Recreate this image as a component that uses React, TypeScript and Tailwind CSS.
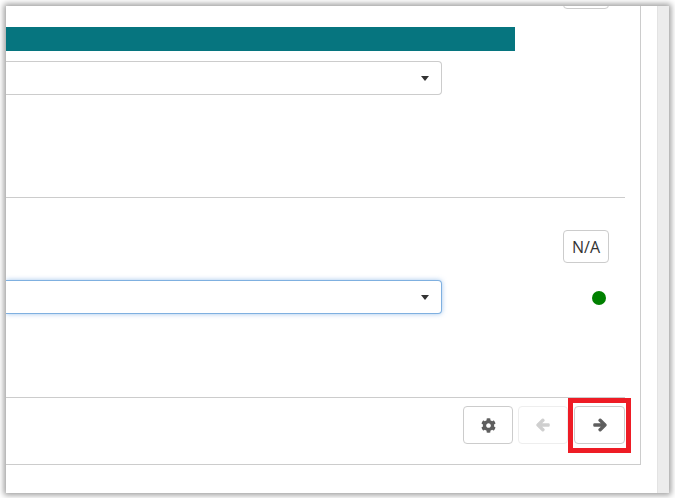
import { FaArrowLeft, FaArrowRight, FaCog } from "react-icons/fa";

function SelectBox({ focused }: { focused?: boolean }) {
  return (
    <div
      className={
        focused
          ? "flex h-[34px] w-[436px] items-center justify-end rounded-r-[4px] border border-l-0 border-[#7fb0e0] bg-white pr-[12px] shadow-[0_0_5px_rgba(102,160,225,0.6)]"
          : "flex h-[34px] w-[436px] items-center justify-end rounded-r-[4px] border border-l-0 border-[#cccccc] bg-white pr-[12px]"
      }
    >
      <span className="h-0 w-0 border-x-[4px] border-t-[5px] border-x-transparent border-t-[#333333]" />
    </div>
  );
}

export default function App() {
  return (
    <div className="relative h-[498px] w-[675px] overflow-hidden bg-white pt-[6px] pl-[6px] font-['Open_Sans',sans-serif]">
      <div className="flex h-[487px] w-[663px] overflow-hidden bg-white shadow-[0_0_6px_2px_rgba(0,0,0,0.4)]">
        <div className="w-[651px] pr-[16px]">
          <div className="flex h-[459px] w-[635px] flex-col border-r border-b border-[#cccccc]">
            <div className="flex justify-end pr-[31px]">
              <div className="-mt-[30px] h-[33px] w-[46px] shrink-0 rounded-[4px] border border-[#cccccc] bg-white" />
            </div>
            <div className="mt-[18px] h-[24px] w-[509px] shrink-0 bg-[#06757f]" />
            <div className="mt-[10px]">
              <SelectBox />
            </div>
            <div className="mt-[102px] mr-[15px] border-t border-[#cccccc]" />
            <div className="mt-[32px] flex justify-end pr-[31px]">
              <button className="flex h-[33px] w-[46px] items-center justify-center rounded-[4px] border border-[#cccccc] bg-white text-[16px] text-[#333333]">
                N/A
              </button>
            </div>
            <div className="mt-[17px] flex items-center">
              <SelectBox focused />
              <span className="mt-[2px] ml-[150px] h-[14px] w-[14px] rounded-full bg-[#008000]" />
            </div>
            <div className="mt-[83px] mr-[15px] flex flex-1 items-start justify-end border-t border-[#cccccc] pt-[8px]">
              <button className="flex h-[38px] w-[50px] items-center justify-center rounded-[4px] border border-[#cccccc] bg-white text-[15px] text-[#5f5f5f]">
                <FaCog />
              </button>
              <button className="ml-[5px] flex h-[38px] w-[50px] items-center justify-center rounded-[4px] border border-[#eeeeee] bg-white text-[14px] text-[#cfcfcf]">
                <FaArrowLeft strokeWidth={45} />
              </button>
              <button className="ml-[6px] flex h-[38px] w-[51px] items-center justify-center rounded-[4px] border border-[#cccccc] bg-white text-[14px] text-[#5f5f5f]">
                <FaArrowRight strokeWidth={45} />
              </button>
            </div>
          </div>
        </div>
        <div className="w-[12px] border-l border-[#e3e3e3] bg-[#ececec]" />
      </div>
      <div className="absolute top-[398px] left-[568px] h-[55px] w-[63px] border-[5px] border-[#ee1c25]" />
    </div>
  );
}
